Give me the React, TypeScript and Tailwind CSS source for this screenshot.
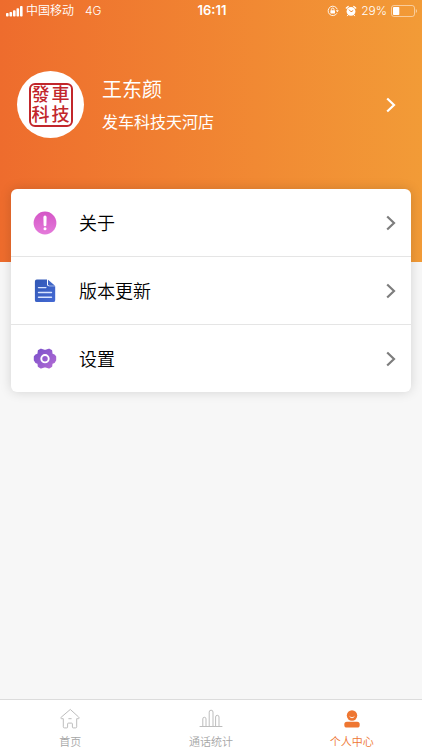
import type { ReactNode } from 'react';

interface MenuItem {
  label: string;
  icon: ReactNode;
}

interface Tab {
  label: string;
  icon: ReactNode;
  active?: boolean;
}

function SignalIcon() {
  return (
    <svg width="17" height="11" viewBox="0 0 17 11" fill="currentColor" aria-hidden="true">
      <rect x="0" y="7" width="2.6" height="3.5" rx="0.8" />
      <rect x="3.5" y="6" width="2.6" height="4.5" rx="0.8" />
      <rect x="7" y="4.3" width="2.6" height="6.2" rx="0.8" />
      <rect x="10.5" y="2.3" width="2.6" height="8.2" rx="0.8" />
      <rect x="14" y="0" width="2.6" height="10.5" rx="0.8" />
    </svg>
  );
}

function RotationLockIcon() {
  return (
    <svg width="12" height="12" viewBox="0 0 12 12" fill="none" stroke="currentColor" aria-hidden="true">
      <path d="M9.9 8.3A4.7 4.7 0 1 1 10.3 4.4" strokeWidth="0.9" />
      <path d="M8.8 5.2h3L10.4 7.2z" fill="currentColor" stroke="none" />
      <rect x="3.4" y="5.3" width="4.6" height="3.2" rx="0.4" fill="currentColor" stroke="none" />
      <path d="M4.4 5.5V4.4a1.3 1.3 0 0 1 2.6 0v1.1" strokeWidth="0.9" />
    </svg>
  );
}

function AlarmIcon() {
  return (
    <svg width="12" height="12" viewBox="0 0 12 12" fill="none" stroke="currentColor" aria-hidden="true">
      <circle cx="6" cy="6.4" r="4.4" fill="currentColor" stroke="none" />
      <path d="M1.3 3 3.2 1.4M8.8 1.4 10.7 3" strokeWidth="1.3" strokeLinecap="round" />
      <path d="m3.2 9.8-.8 1M8.8 9.8l.8 1" strokeWidth="1" strokeLinecap="round" />
      <path d="M4 4.6 6 6.8l2.2-1.3" stroke="#ef8a34" strokeWidth="1" />
    </svg>
  );
}

function BatteryIcon() {
  return (
    <svg width="27" height="12" viewBox="0 0 27 12" aria-hidden="true">
      <rect x="0.5" y="0.5" width="23" height="11" rx="2.4" fill="none" stroke="#fff" strokeOpacity="0.5" />
      <rect x="2" y="2" width="6.3" height="8" rx="0.8" fill="#fff" />
      <path d="M24.8 4v4a2.2 2.2 0 0 0 0-4z" fill="#fff" fillOpacity="0.5" />
    </svg>
  );
}

function Chevron({ className }: { className: string }) {
  return (
    <svg width="10" height="16" viewBox="0 0 10 16" fill="none" stroke="currentColor" strokeWidth="2.2" className={className} aria-hidden="true">
      <path d="m1.2 1.5 6.8 6.5-6.8 6.5" />
    </svg>
  );
}

function AboutIcon() {
  return (
    <svg width="24" height="24" viewBox="0 0 24 24" aria-hidden="true">
      <defs>
        <linearGradient id="about" x1="0" y1="0" x2="0" y2="1">
          <stop offset="0" stopColor="#d455c6" />
          <stop offset="1" stopColor="#e47ada" />
        </linearGradient>
      </defs>
      <circle cx="12" cy="12" r="11.4" fill="url(#about)" />
      <path d="M10.4 6.2a1.6 1.6 0 0 1 3.2 0l-.2 7.7a1.4 1.4 0 0 1-2.8 0z" fill="#fff" />
      <circle cx="12" cy="17.7" r="1.5" fill="#fff" />
    </svg>
  );
}

function VersionIcon() {
  return (
    <svg width="24" height="24" viewBox="0 0 24 24" aria-hidden="true">
      <defs>
        <linearGradient id="version" x1="0" y1="0" x2="1" y2="1">
          <stop offset="0" stopColor="#3158b5" />
          <stop offset="1" stopColor="#4469d4" />
        </linearGradient>
      </defs>
      <path d="M3.8 .5H14v5a1.8 1.8 0 0 0 1.8 1.8h6.4v13.9a1.9 1.9 0 0 1-1.9 1.9H3.8a1.9 1.9 0 0 1-1.9-1.9V2.4A1.9 1.9 0 0 1 3.8 .5z" fill="url(#version)" />
      <path d="M15 .8 22.1 6.7h-5.7A1.4 1.4 0 0 1 15 5.3z" fill="#4067c8" />
      <path d="M5.5 8.6h7.4M5.5 13.5h13M5.5 18.3h13" stroke="#d7e4ff" strokeWidth="1.4" strokeLinecap="round" />
    </svg>
  );
}

function SettingsIcon() {
  return (
    <svg width="24" height="24" viewBox="0 0 24 24" aria-hidden="true">
      <defs>
        <linearGradient id="settings" x1="0" y1="0" x2="1" y2="1">
          <stop offset="0" stopColor="#7950cb" />
          <stop offset="1" stopColor="#b36bd3" />
        </linearGradient>
      </defs>
      <path
        d="M22.4 13.2 21.2 15.2 18.8 16.2 18.4 19.4 16 20.8 12 19.6 8 20.8 5.6 19.4 5.2 16.2 2.8 15.2 1.6 13.2V9.8L2.8 8.2 5.2 7.2 5.6 3.8 8 2.4 12 3.8 16 2.4 18.4 3.8 18.8 7.2 21.2 8.2 22.4 9.8z"
        fill="url(#settings)"
        stroke="url(#settings)"
        strokeWidth="1.6"
        strokeLinejoin="round"
      />
      <circle cx="12" cy="11.7" r="3.7" fill="none" stroke="#fff" strokeWidth="1.9" />
    </svg>
  );
}

function HomeIcon() {
  return (
    <svg width="24" height="22" viewBox="0 0 24 22" fill="none" stroke="currentColor" strokeWidth="1" strokeLinejoin="round" strokeLinecap="round" aria-hidden="true">
      <path d="M12 1.7 3.1 9.3c-.6.6-.3 1.4.5 1.4h1.7v8.1c0 .7.4 1.1 1.1 1.1h2.3c.6 0 .9-.3.9-.9v-3c0-.6.3-.9.9-.9h3c.6 0 .9.3.9.9v3c0 .6.3.9.9.9h2.3c.7 0 1.1-.4 1.1-1.1v-8.1h1.7c.8 0 1.1-.8.5-1.4z" />
      <path d="M10.8 10.7h2.4" />
    </svg>
  );
}

function StatsIcon() {
  return (
    <svg width="24" height="22" viewBox="0 0 24 22" fill="none" stroke="currentColor" strokeWidth="1" strokeLinecap="round" aria-hidden="true">
      <path d="M1 18.5h22M3.8 18.5v-7.6a1.6 1.6 0 0 1 3.2 0v7.6M10.2 18.5V4.1a1.9 1.9 0 0 1 3.8 0v14.4M16.6 18.5V9A1.7 1.7 0 0 1 20 9v9.5" />
    </svg>
  );
}

function PersonIcon() {
  return (
    <svg width="24" height="22" viewBox="0 0 24 22" aria-hidden="true">
      <circle cx="12" cy="7.5" r="5.2" fill="currentColor" />
      <path d="M9.9 8.8c1.1 1.3 3.1 1.3 4.2 0" fill="none" stroke="#fff" strokeWidth="0.9" strokeLinecap="round" />
      <rect x="4.3" y="13.8" width="15.4" height="5.7" rx="2.6" fill="currentColor" />
    </svg>
  );
}

const menuItems: MenuItem[] = [
  { label: '关于', icon: <AboutIcon /> },
  { label: '版本更新', icon: <VersionIcon /> },
  { label: '设置', icon: <SettingsIcon /> },
];

const tabs: Tab[] = [
  { label: '首页', icon: <HomeIcon /> },
  { label: '通话统计', icon: <StatsIcon /> },
  { label: '个人中心', icon: <PersonIcon />, active: true },
];

function StatusBar() {
  return (
    <div className="grid h-[22px] grid-cols-3 items-center pl-1.5 pr-1 text-xs">
      <div className="flex items-center gap-[3px]">
        <SignalIcon />
        <span>中国移动</span>
        <span className="ml-2">4G</span>
      </div>
      <span className="text-center text-[13px] font-semibold">16:11</span>
      <div className="flex items-center justify-end">
        <RotationLockIcon />
        <span className="ml-1.5"><AlarmIcon /></span>
        <span className="mx-1">29%</span>
        <BatteryIcon />
      </div>
    </div>
  );
}

export default function App() {
  return (
    <div className="flex min-h-screen flex-col bg-[#f7f7f7] font-['Inter','Noto_Sans_CJK_SC',sans-serif] font-[350]">
      <header className="bg-linear-to-r from-[#ee6c2d] to-[#f29b37] pb-[124px] text-white">
        <StatusBar />
        <button className="mt-[49px] flex w-full items-center pl-[17px] pr-[26px] text-left">
          <span className="flex size-[67px] shrink-0 items-center justify-center rounded-full bg-white">
            <span className="grid size-[44px] grid-cols-2 place-content-center place-items-center gap-y-0.5 rounded-md border-2 border-[#c2262b] text-[18px] leading-[18px] font-medium text-[#c2262b]">
              <span>發</span>
              <span>車</span>
              <span>科</span>
              <span>技</span>
            </span>
          </span>
          <span className="ml-[18px] flex flex-1 flex-col gap-1.5">
            <span className="text-xl leading-7 font-normal">王东颜</span>
            <span className="text-base leading-6 font-normal">发车科技天河店</span>
          </span>
          <Chevron className="text-white" />
        </button>
      </header>

      <main className="flex-1 px-[11px]">
        <ul className="-mt-[73px] divide-y divide-[#e5e5e5] rounded-md bg-white shadow-[0_0_12px_rgba(0,0,0,0.15)]">
          {menuItems.map(item => (
            <li key={item.label}>
              <button className="flex h-[67px] w-full items-center pl-[22px] pr-[15px] text-left text-lg text-black">
                {item.icon}
                <span className="ml-[22px] flex-1 pt-0.5">{item.label}</span>
                <Chevron className="text-[#7d7d7d]" />
              </button>
            </li>
          ))}
        </ul>
      </main>

      <nav className="grid grid-cols-3 border-t border-[#dcdcdc] bg-white">
        {tabs.map(tab => (
          <a
            key={tab.label}
            href="#"
            className={`flex h-[50px] flex-col items-center pt-2 text-[11px] leading-4 ${tab.active ? 'text-[#ee7631]' : 'text-[#a6a6a6]'}`}
          >
            <span className={tab.active ? '' : 'text-[#bdbdbd]'}>{tab.icon}</span>
            <span className="mt-1">{tab.label}</span>
          </a>
        ))}
      </nav>
    </div>
  );
}
